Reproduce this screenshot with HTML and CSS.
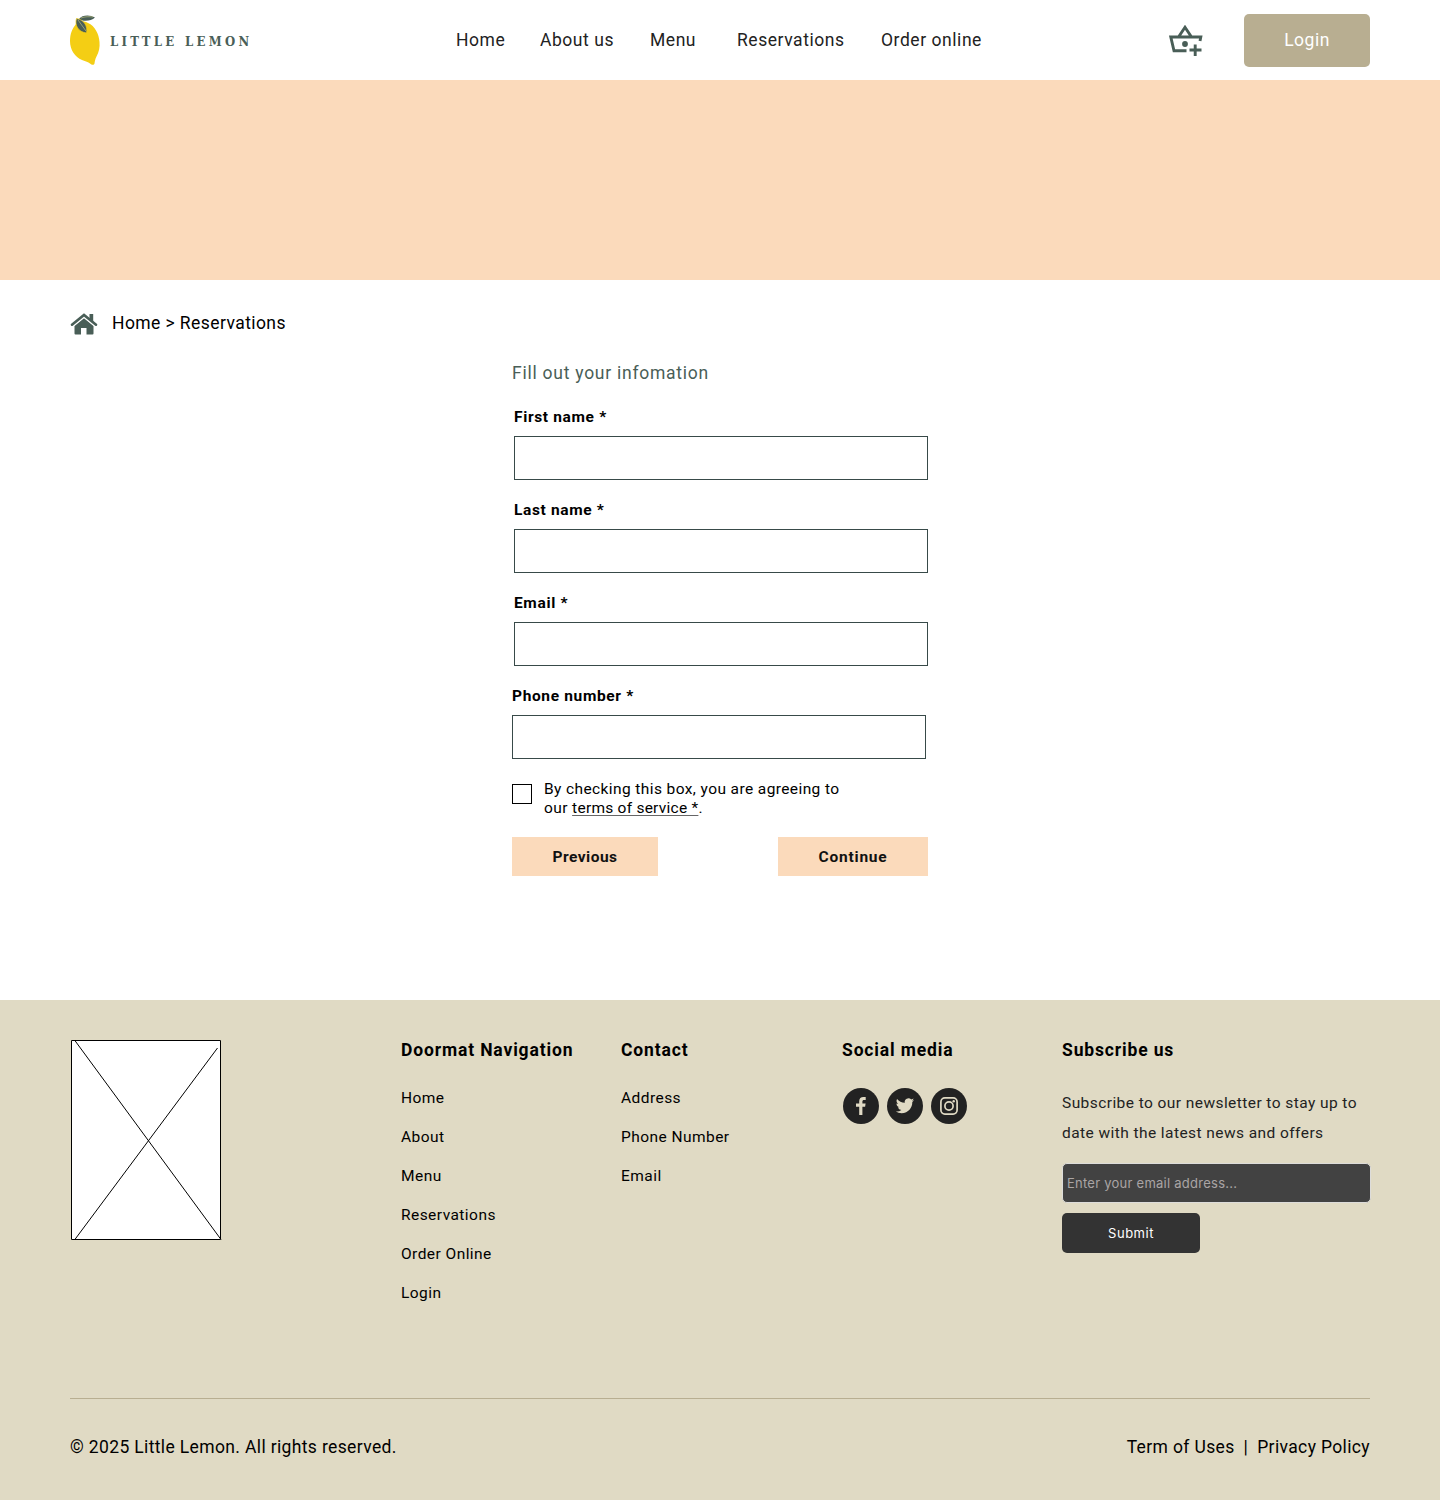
FILE: index.html
```html
<!DOCTYPE html>
<html lang="en">
<head>
<meta charset="utf-8">
<title>Little Lemon – Reservations</title>
<link rel="stylesheet" href="styles.css">
</head>
<body>
<header class="header">
  <a class="brand">
    <svg class="brand-mark" width="30" height="52" viewBox="0 0 30 52">
      <path d="M6 10C2 15 0 20 0 27c0 9 5 16 12 19 4 1.500 6 2 8 3.500 1.500 1.300 4 2 4.500 0 .3-2 .5-4 2-7C29 38 30 33 29.500 28 29 20 25 12 18 9c-4-2-9-2-12 1z" fill="#f4ce14"/>
      <path d="M9 5C12 .8 20 .5 25 3.500c-4 3.500-11 4.500-17 1.500z" fill="#495e57"/>
      <path d="M6.500 4.500C4.500 11 8 18 16.500 19 18 12.500 14 5.500 6.500 4.500z" fill="#495e57" stroke="#f4ce14" stroke-width=".7"/>
      <path d="M8 6l8 11M11 4c4-1.500 8-1.500 12-1" fill="none" stroke="#c9cd83" stroke-width=".6"/>
    </svg>
    <span class="brand-name">LITTLE LEMON</span>
  </a>
  <nav class="nav">
    <a>Home</a><a>About us</a><a>Menu</a><a>Reservations</a><a>Order online</a>
  </nav>
  <div class="actions">
    <svg class="basket" width="34" height="32" viewBox="0 0 34 32" fill="none" stroke="#495e57" stroke-width="2.900">
      <path d="M31 16l.8-4H1.800L5 25.800H17.500M9.500 12L16 2.300 22.500 12"/>
      <path d="M26.200 19.500v11.500M20.500 25h12"/>
      <circle cx="16" cy="19" r="2.900" fill="#495e57" stroke="none"/>
    </svg>
    <button class="login">Login</button>
  </div>
</header>
<div class="banner"></div>
<main class="main">
  <div class="crumbs">
    <svg class="house" width="28" height="22" viewBox="0 0 28 22">
      <path d="M14 5.200L4.500 13v7.500q0 1 1 1H11V15h5.500v6.500h6q1 0 1-1V13z" fill="#495e57"/>
      <path d="M2 11.700L14 2l12 9.700" fill="none" stroke="#fff" stroke-width="4.500"/>
      <path d="M2 11.700L14 2l12 9.700" fill="none" stroke="#495e57" stroke-width="2.600" stroke-linecap="round"/>
      <path d="M19.500 1h3.700v8l-3.700-3z" fill="#495e57"/>
    </svg>
    <span>Home &gt; Reservations</span>
  </div>
  <form class="form">
    <h1 class="form-title">Fill out your infomation</h1>
    <label class="field inset"><span>First name *</span><input type="text"></label>
    <label class="field inset"><span>Last name *</span><input type="text"></label>
    <label class="field inset"><span>Email *</span><input type="text"></label>
    <label class="field"><span>Phone number *</span><input type="text"></label>
    <div class="agree">
      <input class="check" type="checkbox">
      <p>By checking this box, you are agreeing to<br>our <a class="terms">terms of service *</a>.</p>
    </div>
    <div class="buttons">
      <button class="btn previous" type="button">Previous</button>
      <button class="btn continue" type="button">Continue</button>
    </div>
  </form>
</main>
<footer class="footer">
  <div class="columns">
    <svg class="placeholder" width="151" height="201" viewBox="0 0 151 201">
      <path d="M.5.500h149v199H.5z" fill="#fff" stroke="#000"/>
      <path d="M3.500 0L150 199.500M3.500 200L146.500 8" stroke="#000" fill="none"/>
    </svg>
    <section class="col">
      <h2>Doormat Navigation</h2>
      <ul><li>Home</li><li>About</li><li>Menu</li><li>Reservations</li><li>Order Online</li><li>Login</li></ul>
    </section>
    <section class="col">
      <h2>Contact</h2>
      <ul><li>Address</li><li>Phone Number</li><li>Email</li></ul>
    </section>
    <section class="col">
      <h2>Social media</h2>
      <div class="social">
        <svg width="36" height="36" viewBox="0 0 36 36"><circle cx="18" cy="18" r="18" fill="#222"/><path d="M16.200 27v-8.200H13v-3.300h3.200v-2.300c0-2.900 1.600-4.300 4.200-4.300h2.300V12h-1.600c-1.300 0-1.700.6-1.700 1.700v1.800h3.200l-.5 3.300h-2.700V27z" fill="#e0dac4"/></svg>
        <svg width="36" height="36" viewBox="0 0 36 36"><circle cx="18" cy="18" r="18" fill="#222"/><path transform="translate(8.800 8.500) scale(.765)" d="M23.950 4.570a10 10 0 0 1-2.820.770 4.960 4.960 0 0 0 2.160-2.720c-.950.550-2 .950-3.130 1.180a4.920 4.920 0 0 0-8.380 4.480C7.690 8.090 4.070 6.130 1.640 3.160a4.820 4.820 0 0 0-.670 2.470c0 1.710.870 3.210 2.190 4.100a4.900 4.900 0 0 1-2.230-.620v.060a4.920 4.920 0 0 0 3.950 4.830 5 5 0 0 1-2.210.080 4.940 4.940 0 0 0 4.600 3.420A9.870 9.870 0 0 1 0 19.540a14 14 0 0 0 7.550 2.210c9.050 0 14-7.500 14-13.980 0-.210 0-.420-.020-.630a9.940 9.940 0 0 0 2.420-2.570z" fill="#e0dac4"/></svg>
        <svg width="36" height="36" viewBox="0 0 36 36"><circle cx="18" cy="18" r="18" fill="#222"/><g fill="none" stroke="#e0dac4" stroke-width="1.700"><rect x="9.900" y="9.900" width="16.200" height="16.200" rx="4"/><circle cx="18" cy="18" r="4.100"/></g><circle cx="22.700" cy="13.300" r="1.200" fill="#e0dac4"/></svg>
      </div>
    </section>
    <section class="col">
      <h2>Subscribe us</h2>
      <p class="news">Subscribe to our newsletter to stay up to<br>date with the latest news and offers</p>
      <input class="email" type="text" placeholder="Enter your email address...">
      <button class="submit">Submit</button>
    </section>
  </div>
  <div class="legal">
    <span>© 2025 Little Lemon. All rights reserved.</span>
    <div class="links"><span>Term of Uses</span><span>|</span><span>Privacy Policy</span></div>
  </div>
</footer>
</body>
</html>
```
FILE: styles.css
```css
* { box-sizing: border-box; margin: 0; padding: 0; }
body { font: 15.500px/19px Roboto, sans-serif; letter-spacing: .43px; color: #000; background: #fff; }
button, input { font: inherit; letter-spacing: inherit; border: 0; border-radius: 0; }
ul { list-style: none; }

.header { height: 80px; padding: 0 70px; display: grid; grid-template-columns: 386px 1fr 201px; align-items: center; }
.brand { display: flex; align-items: center; gap: 10px; }
.brand-mark { flex: none; }
.brand-name { font: bold 13px/20px "DejaVu Serif Condensed", "DejaVu Serif", serif; font-stretch: condensed; letter-spacing: 3.300px; color: #495e57; white-space: nowrap; padding-top: 3px; }
.nav { display: grid; grid-template-columns: 84px 110px 87px 144px 110px; font-size: 17.500px; font-weight: 450; letter-spacing: .55px; line-height: 22px; color: #222; white-space: nowrap; }
.actions { display: flex; align-items: center; justify-content: space-between; }
.basket { margin-top: 1px; }
.login { width: 126px; height: 53px; border-radius: 5px; background: #b8ae91; color: #fff; font-size: 17.500px; letter-spacing: .5px; }

.banner { height: 200px; background: #fbdabb; }

.main { height: 720px; padding: 32px 70px 0; }
.crumbs { display: flex; align-items: center; gap: 14px; height: 22px; font-size: 17.500px; font-weight: 450; line-height: 22px; letter-spacing: .42px; }
.house { margin-top: 1px; }
.form { width: 416px; margin: 28px auto 0; }
.form-title { font-size: 17.500px; font-weight: 400; line-height: 22px; letter-spacing: .75px; color: #495e57; margin-bottom: 24px; }
.field { display: flex; flex-direction: column; gap: 9px; width: 414px; height: 72px; margin-bottom: 21px; font-weight: 700; letter-spacing: .65px; }
.field.inset { margin-left: 2px; }
.field input { height: 44px; border: 1px solid #384a49; background: #fff; padding: 0 10px; }
.agree { display: flex; gap: 12px; margin-bottom: 19px; }
.check { appearance: none; width: 20px; height: 20px; border: 1px solid #000; margin-top: 4px; }
.agree p { letter-spacing: .4px; }
.terms { text-decoration: underline; text-decoration-color: #666; text-decoration-skip-ink: none; text-underline-offset: 2px; text-decoration-thickness: 1px; letter-spacing: .25px; }
.buttons { display: flex; justify-content: space-between; }
.btn { height: 39px; background: #fbdabb; color: #111; font-weight: 700; letter-spacing: .5px; padding-top: 1px; }
.previous { width: 146px; }
.continue { width: 150px; letter-spacing: .8px; }

.footer { height: 500px; padding: 40px 70px 0; background: #e0dac4; }
.columns { display: grid; grid-template-columns: 330px 220px 221px 220px 309px; height: 358px; align-items: start; }
.placeholder { margin-left: 1px; }
.col { padding-left: 1px; }
.col h2 { font-size: 17.500px; line-height: 21px; letter-spacing: .85px; white-space: nowrap; }
.col ul { margin-top: 28px; display: grid; gap: 20px; letter-spacing: .45px; }
.social { display: flex; gap: 8px; margin-top: 27px; padding-left: 1px; }
.news { margin-top: 27px; line-height: 30px; color: #222; white-space: nowrap; }
.email { display: block; width: 309px; height: 40px; margin-top: 15px; padding: 0 4px; border: 1px solid #dddcda; border-radius: 5px; background: #424242; font: 13px "Inter", sans-serif; letter-spacing: .25px; color: #fff; }
.email::placeholder { color: #aaa5a5; }
.submit { display: block; width: 138px; height: 40px; margin-top: 10px; border-radius: 5px; background: #333; color: #fff; font: 13px "Inter", sans-serif; letter-spacing: .5px; }
.legal { display: flex; justify-content: space-between; border-top: 1px solid #b8ae91; padding-top: 37px; font-size: 17.500px; font-weight: 450; line-height: 22px; letter-spacing: .36px; }
.links { display: flex; gap: 9px; }
```
